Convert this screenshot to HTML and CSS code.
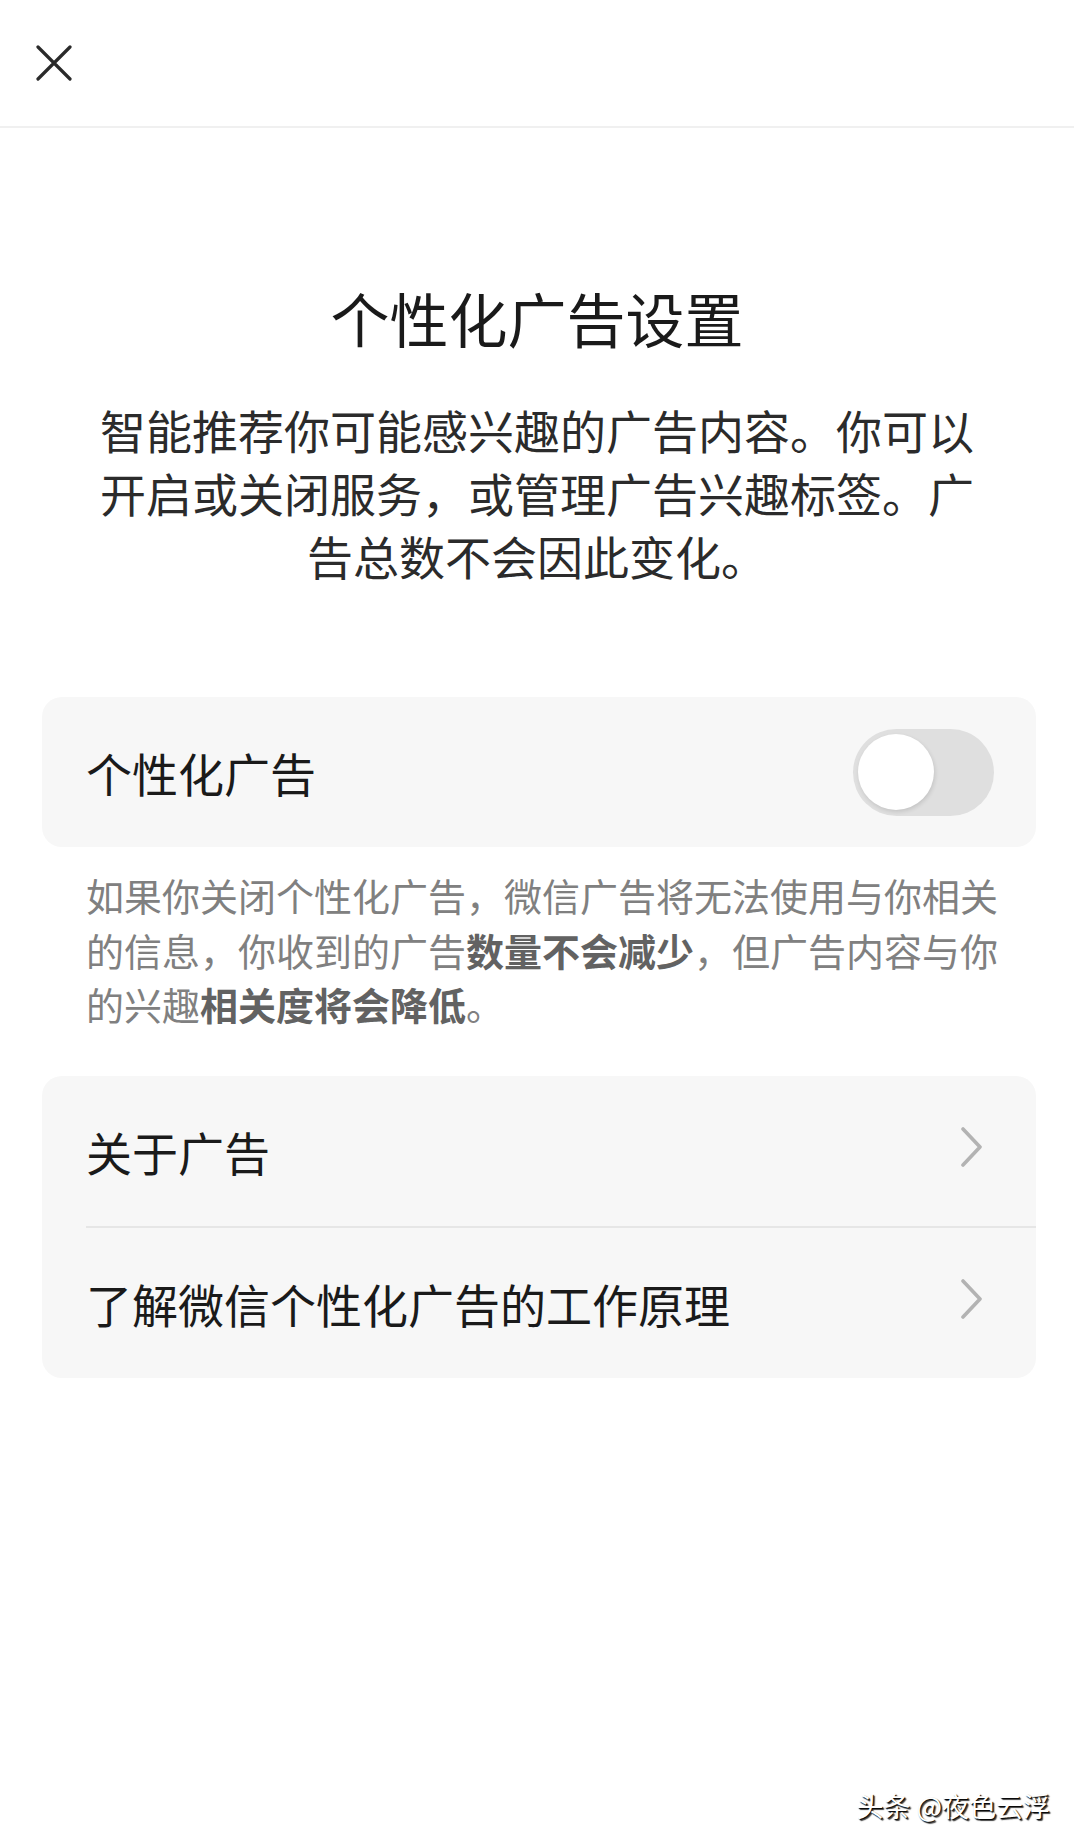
FILE: index.html
```html
<!DOCTYPE html>
<html>
<head>
    <title>个性化广告设置</title>
    <link rel="stylesheet" href="styles.css">
</head>
<body>
    <div class="page">
        <div class="topbar">
            <svg class="close" width="36" height="36" viewBox="0 0 36 36">
                <path d="M2 2 L34 34 M34 2 L2 34" stroke="#2a2a2a" stroke-width="3.2" stroke-linecap="round" fill="none"/>
            </svg>
        </div>

        <div class="title">个性化广告设置</div>
        <div class="desc">智能推荐你可能感兴趣的广告内容。你可以开启或关闭服务，或管理广告兴趣标签。广告总数不会因此变化。</div>

        <div class="card">
            <div class="row">
                <span class="row-label">个性化广告</span>
                <div class="switch"><div class="knob"></div></div>
            </div>
        </div>

        <div class="note">如果你关闭个性化广告，微信广告将无法使用与你相关的信息，你收到的广告<b>数量不会减少</b>，但广告内容与你的兴趣<b>相关度将会降低</b>。</div>

        <div class="card">
            <div class="row">
                <span class="row-label">关于广告</span>
                <svg class="chevron" width="22" height="40" viewBox="0 0 22 40">
                    <path d="M2 2 L19 20 L2 38" stroke="#b3b3b3" stroke-width="3.6" stroke-linecap="round" stroke-linejoin="round" fill="none"/>
                </svg>
            </div>
            <div class="divider"></div>
            <div class="row">
                <span class="row-label">了解微信个性化广告的工作原理</span>
                <svg class="chevron" width="22" height="40" viewBox="0 0 22 40">
                    <path d="M2 2 L19 20 L2 38" stroke="#b3b3b3" stroke-width="3.6" stroke-linecap="round" stroke-linejoin="round" fill="none"/>
                </svg>
            </div>
        </div>

        <div class="watermark">头条 @夜色云浮</div>
    </div>
</body>
</html>
```

FILE: styles.css
```css
body {
    margin: 0;
    background-color: #ffffff;
    font-family: "Noto Sans CJK SC", "Noto Sans", sans-serif;
    text-spacing-trim: space-all;
}
.page {
    position: relative;
    width: 1074px;
    height: 1844px;
    overflow: hidden;
}
.topbar {
    height: 126px;
    border-bottom: 2px solid #f0f0f0;
    display: flex;
    align-items: center;
    padding-left: 36px;
}
.close {
    display: block;
}
.title {
    margin-top: 150px;
    font-size: 59px;
    line-height: 80px;
    text-align: center;
    color: #1a1a1a;
}
.desc {
    width: 890px;
    margin: 40px auto 0;
    font-size: 46px;
    line-height: 63px;
    text-align: center;
    color: #2b2b2b;
}
.card {
    margin: 110px 38px 0 42px;
    background-color: #f7f7f7;
    border-radius: 20px;
}
.note + .card {
    margin-top: 44px;
}
.row {
    height: 150px;
    display: flex;
    align-items: center;
    justify-content: space-between;
    padding: 0 42px 0 44px;
}
.row-label {
    font-size: 46px;
    color: #1a1a1a;
}
.switch {
    width: 141px;
    height: 87px;
    border-radius: 44px;
    background-color: #dfdfdf;
    display: flex;
    align-items: center;
    padding-left: 5px;
    box-sizing: border-box;
}
.knob {
    width: 76px;
    height: 76px;
    border-radius: 50%;
    background-color: #ffffff;
    box-shadow: 1px 2px 4px rgba(0, 0, 0, 0.12);
}
.chevron {
    display: block;
    margin-right: 11px;
    margin-top: -8px;
}
.divider {
    height: 2px;
    margin-left: 44px;
    background-color: #e6e6e6;
}
.note {
    width: 920px;
    margin: 21px 0 0 86px;
    font-size: 38px;
    line-height: 54.5px;
    color: #808080;
}
.note b {
    font-weight: 700;
    color: #626262;
}
.watermark {
    position: absolute;
    right: 24px;
    top: 1786px;
    font-size: 27px;
    color: #ffffff;
    text-shadow: 1px 1px 1px #000000, 2px 2px 1px rgba(0, 0, 0, 0.7);
}
```
